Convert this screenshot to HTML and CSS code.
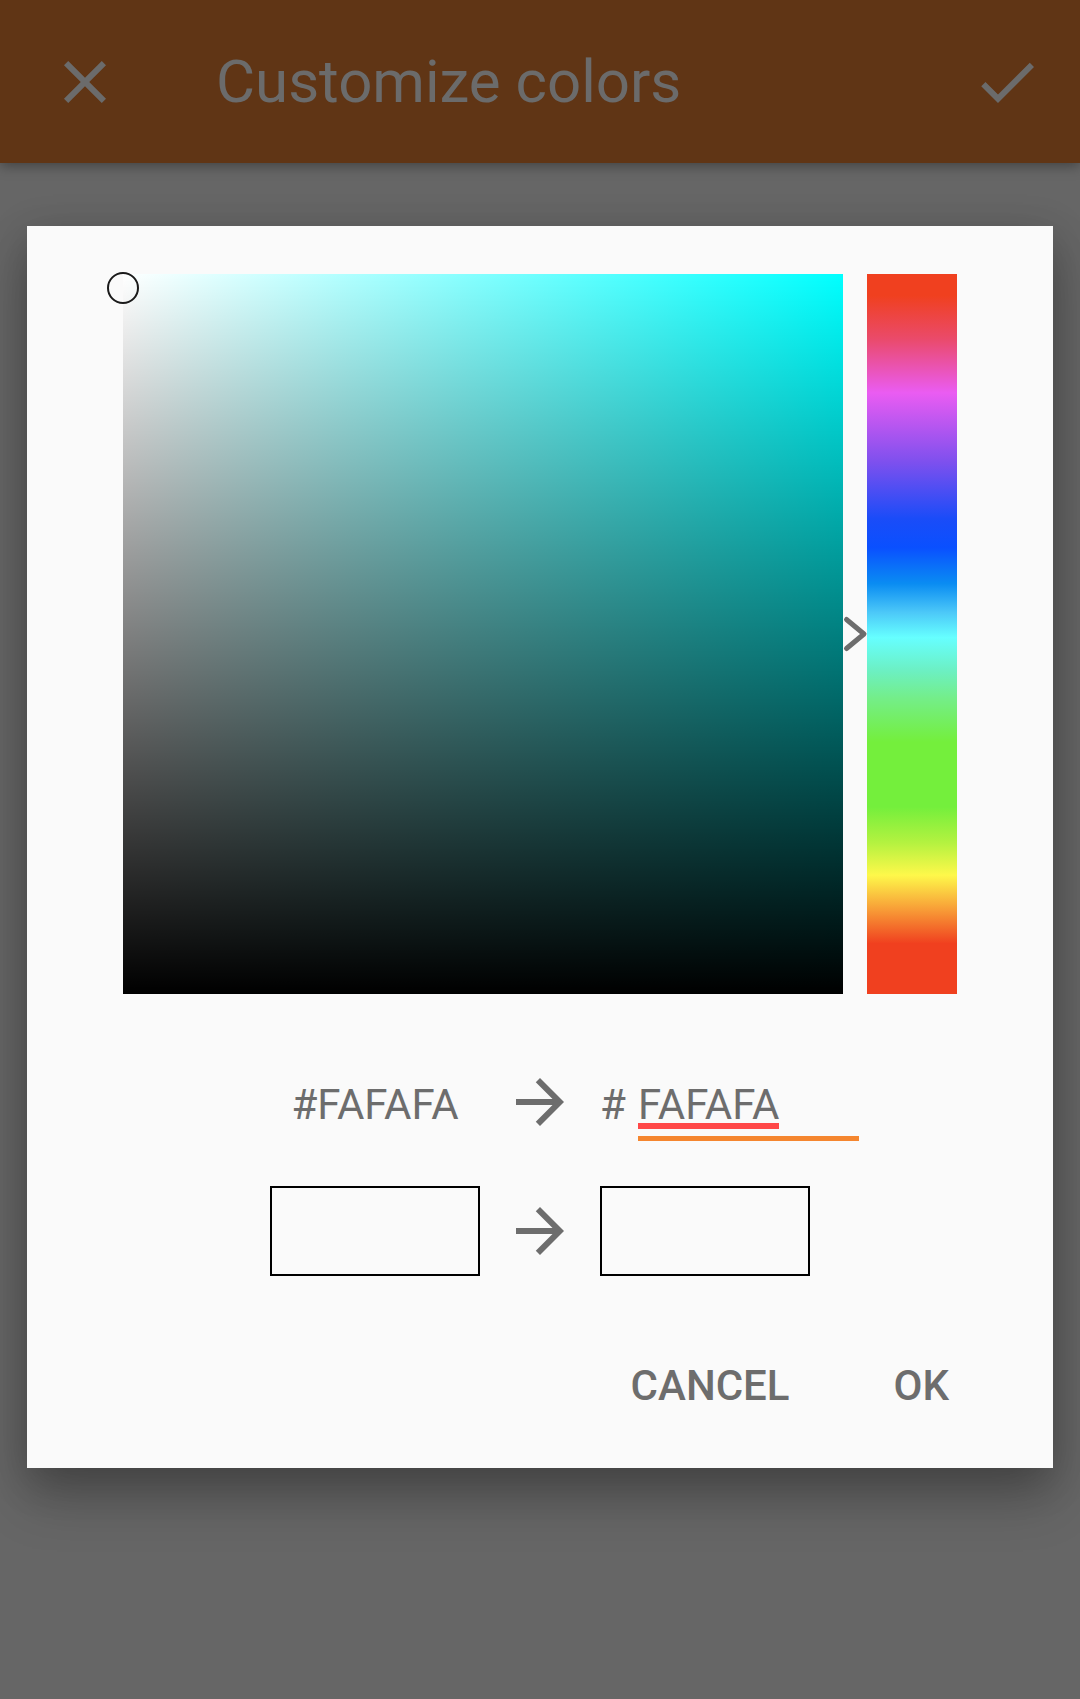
FILE: index.html
```html
<!DOCTYPE html>
<html lang="en">
<head>
<meta charset="utf-8">
<title>Customize colors</title>
<link rel="stylesheet" href="styles.css">
</head>
<body>
<div class="screen">
  <header class="appbar">
    <svg class="appbar-icon" viewBox="0 0 24 24" aria-label="Close"><path d="M19 6.41L17.59 5 12 10.59 6.41 5 5 6.41 10.59 12 5 17.59 6.41 19 12 13.41 17.59 19 19 17.59 13.41 12z"/></svg>
    <h1 class="appbar-title">Customize colors</h1>
    <svg class="appbar-icon appbar-check" viewBox="0 0 24 24" aria-label="Done"><path d="M9 16.17L4.83 12l-1.42 1.41L9 19 21 7l-1.41-1.41z"/></svg>
  </header>

  <main class="content">
    <section class="dialog">
      <div class="picker">
        <div class="sv-square">
          <span class="sv-handle"></span>
        </div>
        <div class="hue-bar">
          <svg class="hue-pointer" viewBox="0 0 24 40"><polyline points="3.5,5.5 21,20 3.5,34.5"/></svg>
        </div>
      </div>

      <div class="hex-row">
        <div class="hex-old">#FAFAFA</div>
        <svg class="arrow" viewBox="0 0 24 24"><path d="M12 4l-1.41 1.41L16.17 11H4v2h12.17l-5.58 5.59L12 20l8-8z"/></svg>
        <div class="hex-new">
          <span class="hash">#</span>
          <div class="hex-field"><span class="hex-value">FAFAFA</span></div>
        </div>
      </div>

      <div class="swatch-row">
        <div class="swatch"></div>
        <svg class="arrow" viewBox="0 0 24 24"><path d="M12 4l-1.41 1.41L16.17 11H4v2h12.17l-5.58 5.59L12 20l8-8z"/></svg>
        <div class="swatch"></div>
      </div>

      <div class="actions">
        <span class="btn">CANCEL</span>
        <span class="btn">OK</span>
      </div>
    </section>
  </main>
</div>
</body>
</html>
```

FILE: styles.css
```css
* { box-sizing: border-box; }

html, body {
  margin: 0;
  padding: 0;
}

body {
  width: 1080px;
  height: 1699px;
  overflow: hidden;
  background: #666666;
  font-family: Roboto, "Liberation Sans", sans-serif;
  color: #6d6d6d;
}

.screen {
  width: 1080px;
  height: 1699px;
  display: flex;
  flex-direction: column;
}

.appbar {
  position: relative;
  z-index: 2;
  height: 163px;
  flex: none;
  background: #603515;
  display: flex;
  align-items: center;
  padding: 0 37px 0 49px;
  box-shadow: 0 3px 12px rgba(0, 0, 0, 0.35);
}

.appbar-icon {
  width: 72px;
  height: 72px;
  fill: #6b6b6b;
  flex: none;
}

.appbar-title {
  margin: 0 0 0 95px;
  flex: 1;
  font-size: 60px;
  font-weight: 400;
  line-height: 60px;
  color: #6b6b6b;
  padding-top: 1px;
}

.content {
  flex: 1;
  padding: 63px 27px 0;
}

.dialog {
  background: #fafafa;
  width: 1026px;
  padding: 48px 96px 61px;
  box-shadow: 0 30px 50px rgba(0, 0, 0, 0.24), 0 10px 40px rgba(0, 0, 0, 0.18);
}

.picker {
  display: flex;
  gap: 24px;
  height: 720px;
}

.sv-square {
  position: relative;
  width: 720px;
  height: 720px;
  background:
    linear-gradient(to bottom, rgba(0, 0, 0, 0), #000000),
    linear-gradient(to right, #ffffff, #00ffff);
}

.sv-handle {
  position: absolute;
  left: -16px;
  top: -2px;
  width: 32px;
  height: 32px;
  border: 2.5px solid #1a1a1a;
  border-radius: 50%;
}

.hue-bar {
  position: relative;
  width: 90px;
  height: 720px;
  background: linear-gradient(to bottom,
    #f0401f 0%,
    #f0401f 3%,
    #ea4a6a 9%,
    #ea5cf2 16.5%,
    #7f50ee 26%,
    #1a4cf8 34%,
    #0a50ff 38%,
    #0a8cf2 43%,
    #4cc8f8 47%,
    #66ffff 50.5%,
    #6cf0c4 55%,
    #74ee88 59%,
    #74ef3c 65%,
    #74ef3c 74%,
    #b4f240 79%,
    #fef84a 83.5%,
    #f8a238 88%,
    #f0401f 93%,
    #f0401f 100%);
}

.hue-pointer {
  position: absolute;
  left: -24px;
  top: 340px;
  width: 24px;
  height: 40px;
  overflow: visible;
}

.hue-pointer polyline {
  fill: none;
  stroke: #6d6d6d;
  stroke-width: 5;
  stroke-linecap: round;
  stroke-linejoin: round;
}

.hex-row,
.swatch-row {
  display: grid;
  grid-template-columns: 210px 48px 210px;
  column-gap: 36px;
  justify-content: center;
}

.hex-row {
  margin-top: 72px;
  height: 72px;
}

.swatch-row {
  margin-top: 48px;
  height: 90px;
  align-items: center;
}

.arrow {
  width: 72px;
  height: 72px;
  margin-left: -12px;
  fill: #6d6d6d;
}

.hex-old {
  margin-top: 21px;
  font-size: 42px;
  line-height: 36px;
  text-align: center;
  white-space: nowrap;
}

.hex-new {
  margin-top: 21px;
  display: flex;
  align-items: flex-start;
  white-space: nowrap;
  font-size: 42px;
  line-height: 36px;
}

.hash {
  width: 38px;
  flex: none;
}

.hex-field {
  width: 221px;
  flex: none;
  padding-bottom: 7px;
  border-bottom: 5px solid #f5862f;
}

.hex-value {
  display: inline-block;
  border-bottom: 6px solid #ff4848;
}

.swatch {
  width: 210px;
  height: 90px;
  border: 2px solid #000000;
  background: #fafafa;
}

.actions {
  margin-top: 89px;
  display: flex;
  justify-content: flex-end;
  gap: 104px;
  padding-right: 8px;
}

.btn {
  font-size: 42px;
  font-weight: 500;
  line-height: 42px;
  color: #6d6d6d;
}
```
